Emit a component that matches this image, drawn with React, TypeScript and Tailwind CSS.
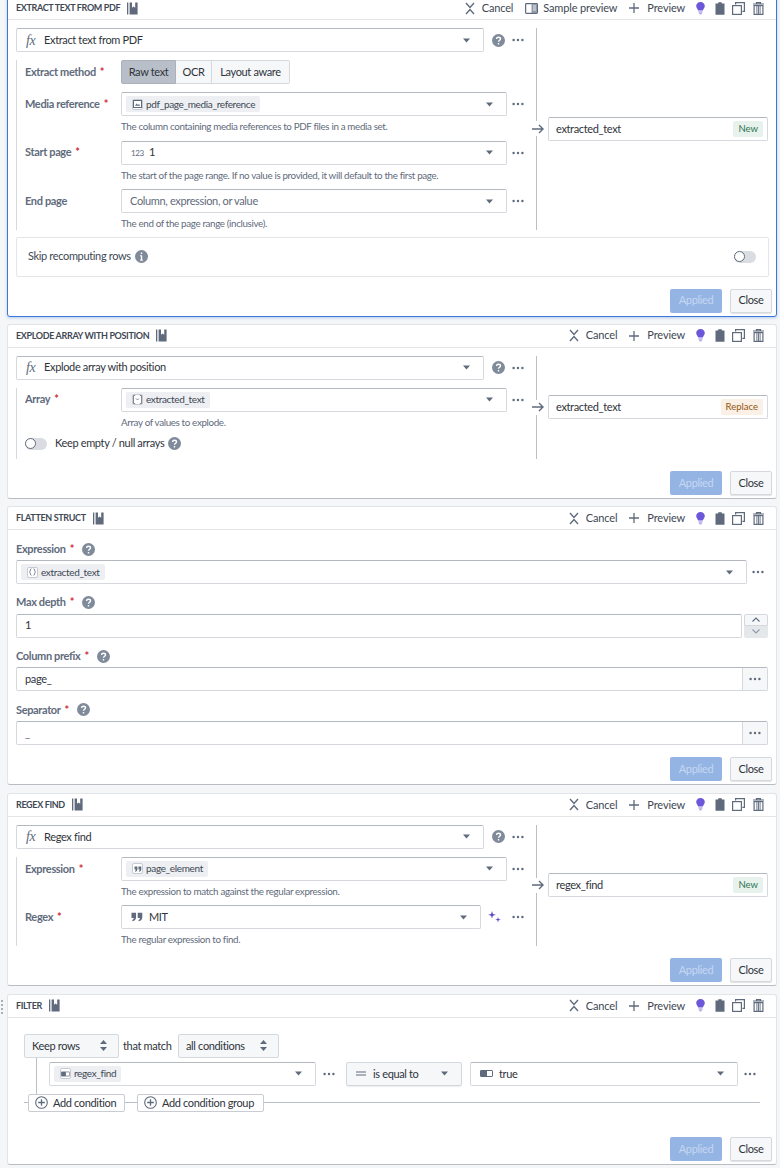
import type { ReactNode } from 'react';

const inputCls =
  'flex h-6 items-center rounded-[2px] border border-[#d5d9de] border-t-[#b4b9bf] bg-white text-[#2f343c]';

function BookIcon() {
  return (
    <svg width="11" height="13" viewBox="0 0 11 13" className="shrink-0">
      <rect x="0" y="0.5" width="1.3" height="12" fill="#5f6b7c" />
      <path d="M2.6 0.5H10.6V12.5H2.6Z M5 0.5V5.8L6.6 4.6L8.2 5.8V0.5Z" fill="#5f6b7c" fillRule="evenodd" />
    </svg>
  );
}

function CancelIcon() {
  return (
    <svg width="10" height="13" viewBox="0 0 10 13" fill="none" stroke="#5f6b7c" strokeWidth="1.4" className="shrink-0">
      <path d="M1 1L5 5.4L9 1" />
      <path d="M1 12L5 7.6L9 12" />
    </svg>
  );
}

function PanelIcon() {
  return (
    <svg width="13" height="11" viewBox="0 0 13 11" className="shrink-0">
      <rect x="0.6" y="0.6" width="11.8" height="9.8" rx="0.8" fill="none" stroke="#5f6b7c" strokeWidth="1.2" />
      <rect x="6.5" y="1" width="5.5" height="9" fill="#8f99a8" />
      <path d="M8 3H11M8 5H11M8 7H11" stroke="#fff" strokeWidth="0.8" />
    </svg>
  );
}

function PlusIcon() {
  return (
    <svg width="10" height="10" viewBox="0 0 10 10" stroke="#5f6b7c" strokeWidth="1.3" className="shrink-0">
      <path d="M5 0V10M0 5H10" />
    </svg>
  );
}

function BulbIcon() {
  return (
    <svg width="9" height="13" viewBox="0 0 9 13" className="shrink-0">
      <path d="M4.5 0C2 0 0.2 1.8 0.2 4.1C0.2 6 1.7 7 2.2 8.6H6.8C7.3 7 8.8 6 8.8 4.1C8.8 1.8 7 0 4.5 0Z" fill="#6c56d9" />
      <path d="M2.5 10H6.5M3.3 11.8H5.7" stroke="#8e7de2" strokeWidth="1.1" />
    </svg>
  );
}

function ClipboardIcon() {
  return (
    <svg width="10" height="13" viewBox="0 0 10 13" className="shrink-0">
      <path d="M3.2 0.3H6.8V1.6H9.5V12.7H0.5V1.6H3.2Z" fill="#5f6b7c" />
    </svg>
  );
}

function DuplicateIcon() {
  return (
    <svg width="13" height="13" viewBox="0 0 13 13" fill="none" stroke="#5f6b7c" strokeWidth="1.2" className="shrink-0">
      <rect x="0.6" y="3.6" width="8.8" height="8.8" />
      <path d="M3.6 2.6V0.6H12.4V9.4H10.4" />
    </svg>
  );
}

function TrashIcon() {
  return (
    <svg width="11" height="13" viewBox="0 0 11 13" fill="none" stroke="#5f6b7c" className="shrink-0">
      <path d="M0 2H11M3.5 1.5V0.6H7.5V1.5" strokeWidth="1.2" />
      <rect x="1.1" y="3.6" width="8.8" height="8.8" strokeWidth="1.2" />
      <path d="M3.9 4V12M5.5 4V12M7.1 4V12" strokeWidth="0.9" />
    </svg>
  );
}

function HelpIcon({ kind = 'help' }: { kind?: 'help' | 'info' }) {
  return (
    <svg width="13" height="13" viewBox="0 0 13 13" className="shrink-0">
      <circle cx="6.5" cy="6.5" r="6.5" fill="#7f8a9a" />
      {kind === 'help' ? (
        <path d="M4.5 5C4.6 3.8 5.4 3.2 6.5 3.2C7.7 3.2 8.5 3.9 8.5 4.9C8.5 6.2 6.6 6.3 6.5 7.8M6.5 9V10.4" fill="none" stroke="#fff" strokeWidth="1.4" />
      ) : (
        <path d="M6.5 2.6V4.1M6.5 5.4V10.2M5.3 5.6H6.5M5.2 10.1H7.8" fill="none" stroke="#fff" strokeWidth="1.4" />
      )}
    </svg>
  );
}

function Dots() {
  return (
    <svg width="12" height="4" viewBox="0 0 12 4" fill="#5f6b7c" className="shrink-0">
      <circle cx="1.6" cy="2" r="1.2" />
      <circle cx="6" cy="2" r="1.2" />
      <circle cx="10.4" cy="2" r="1.2" />
    </svg>
  );
}

function Caret() {
  return (
    <svg width="7" height="5" viewBox="0 0 7 5" fill="#5f6b7c" className="shrink-0">
      <path d="M0 0.5H7L3.5 4.5Z" />
    </svg>
  );
}

function UpDown() {
  return (
    <svg width="7" height="11" viewBox="0 0 7 11" fill="#5f6b7c" className="shrink-0">
      <path d="M3.5 0L7 4H0Z M3.5 11L0 7H7Z" />
    </svg>
  );
}

function QuoteIcon({ size = 8 }: { size?: number }) {
  return (
    <svg width={size + 2} height={size} viewBox="0 0 10 8" fill="#5f6b7c" className="shrink-0">
      <path d="M0.4 0.5H4.2V4.2C4.2 6 3 7.3 1.3 7.6L1 6.6C1.8 6.3 2.3 5.6 2.3 4.8H0.4Z" />
      <path d="M5.6 0.5H9.4V4.2C9.4 6 8.2 7.3 6.5 7.6L6.2 6.6C7 6.3 7.5 5.6 7.5 4.8H5.6Z" />
    </svg>
  );
}

function ImageGlyph() {
  return (
    <svg width="9" height="8" viewBox="0 0 9 8" className="shrink-0">
      <rect x="0.5" y="0.5" width="8" height="7" fill="none" stroke="#5f6b7c" />
      <path d="M2 5.8L3.6 3.6L5 5L6 4L7.2 5.8Z" fill="#5f6b7c" />
    </svg>
  );
}

function ArrayGlyph() {
  return (
    <svg width="9" height="9" viewBox="0 0 9 9" fill="none" stroke="#5f6b7c" strokeWidth="0.8" className="shrink-0">
      <path d="M2.2 0.5H0.5V8.5H2.2M6.8 0.5H8.5V8.5H6.8M3 3.5L4.5 5L6 3.5" />
    </svg>
  );
}

function StructGlyph() {
  return (
    <svg width="7" height="8" viewBox="0 0 7 8" fill="none" stroke="#5f6b7c" strokeWidth="0.8" className="shrink-0">
      <path d="M2.4 0.5C1.2 0.5 1.6 3.4 0.5 4C1.6 4.6 1.2 7.5 2.4 7.5M4.6 0.5C5.8 0.5 5.4 3.4 6.5 4C5.4 4.6 5.8 7.5 4.6 7.5" />
    </svg>
  );
}

function BoolGlyph({ wide }: { wide?: boolean }) {
  return (
    <svg width={wide ? 13 : 9} height={wide ? 7 : 6} viewBox="0 0 13 7" className="shrink-0">
      <rect x="0.5" y="0.5" width="12" height="6" rx="0.6" fill="none" stroke="#5f6b7c" />
      <rect x="0.5" y="0.5" width="6.5" height="6" fill="#5f6b7c" />
    </svg>
  );
}

function CircledPlus() {
  return (
    <svg width="13" height="13" viewBox="0 0 13 13" fill="none" stroke="#5f6b7c" strokeWidth="1.1" className="shrink-0">
      <circle cx="6.5" cy="6.5" r="5.8" />
      <path d="M6.5 3.2V9.8M3.2 6.5H9.8" strokeWidth="1.3" />
    </svg>
  );
}

function Sparkles() {
  return (
    <svg width="13" height="12" viewBox="0 0 13 12" fill="#5b45c9" className="shrink-0">
      <path d="M4 0L4.9 2.9L7.8 3.8L4.9 4.7L4 7.6L3.1 4.7L0.2 3.8L3.1 2.9Z" />
      <path d="M10 6L10.6 8.1L12.7 8.7L10.6 9.3L10 11.4L9.4 9.3L7.3 8.7L9.4 8.1Z" />
    </svg>
  );
}

function Chip({ icon, children }: { icon: ReactNode; children: ReactNode }) {
  return (
    <span className="ml-1 flex h-4 items-center gap-[3px] rounded-[2px] bg-[#edeff2] pl-[6px] pr-[5px] text-[10px] text-[#404854]">
      <span className="flex h-[11px] w-[11px] items-center justify-center rounded-[2px] border border-[#c5cbd3] bg-white">{icon}</span>
      {children}
    </span>
  );
}

function Toggle() {
  return (
    <span className="flex h-3 w-[22px] shrink-0 items-center rounded-full bg-[#d9dce1]">
      <span className="h-[11px] w-[11px] rounded-full border border-[#5f6b7c] bg-white" />
    </span>
  );
}

function Star() {
  return <span className="ml-1 text-[#cd2f3d]">*</span>;
}

function Card({ title, sample, active, mt, children }: { title: string; sample?: boolean; active?: boolean; mt: string; children: ReactNode }) {
  return (
    <section className={`relative ml-[7px] w-[770px] rounded-[3px] border bg-white ${mt} ${active ? 'border-[#3c78d8] shadow-[0_1px_3px_rgba(60,120,216,0.35)]' : 'border-[#e1e4e8] border-b-[#b9bdc3]'}`}>
      <header className="flex h-[23px] items-center border-b border-[#e3e5e8] pl-2 pr-[12px]">
        <h2 className="text-[9px] font-bold uppercase text-[#404854]">{title}</h2>
        <span className="ml-[7px]"><BookIcon /></span>
        <div className="ml-auto flex items-center text-[11px] tracking-[-0.15px] text-[#404854]">
          <CancelIcon />
          <span className="ml-[7px]">Cancel</span>
          {sample && (
            <>
              <span className="ml-[12px]"><PanelIcon /></span>
              <span className="ml-[5px]">Sample preview</span>
            </>
          )}
          <span className="ml-[12px]"><PlusIcon /></span>
          <span className="ml-[8px]">Preview</span>
          <span className="ml-[11px]"><BulbIcon /></span>
          <span className="ml-[10px]"><ClipboardIcon /></span>
          <span className="ml-[7px]"><DuplicateIcon /></span>
          <span className="ml-[8px]"><TrashIcon /></span>
        </div>
      </header>
      {children}
    </section>
  );
}

function Footer({ gap = 'mt-3' }: { gap?: string }) {
  return (
    <div className={`flex justify-end gap-2 pb-[3px] pr-1 ${gap}`}>
      <button className="h-6 w-[52px] rounded-[2px] bg-[#94b4e4] text-[11px] text-[#c6d7f1]">Applied</button>
      <button className="h-6 w-[42px] rounded-[2px] border border-[#d5d9de] bg-[#f6f7f9] text-[11px] text-[#2f343c] shadow-[0_1px_1px_rgba(17,20,24,0.12)]">Close</button>
    </div>
  );
}

function FnRow({ name }: { name: string }) {
  return (
    <div className="flex items-center">
      <div className={`${inputCls} w-[468px] pl-[9px] pr-[13px] text-[11px]`}>
        <span className="w-[18px] font-['Liberation_Serif',serif] text-[14px] italic text-[#5f6b7c]">fx</span>
        {name}
        <span className="ml-auto"><Caret /></span>
      </div>
      <span className="ml-2"><HelpIcon /></span>
      <span className="ml-[7px]"><Dots /></span>
    </div>
  );
}

function FieldRow({ label, required = true, help, width = 'w-[386px]', extra, children }: { label: string; required?: boolean; help?: string; width?: string; extra?: ReactNode; children: ReactNode }) {
  return (
    <div>
      <div className="flex items-center">
        <div className="w-[96px] shrink-0 text-[11px] font-bold text-[#5f6b7c]">
          {label}
          {required && <Star />}
        </div>
        <div className={`${inputCls} ${width} pr-[13px] text-[11px]`}>
          {children}
          <span className="ml-auto"><Caret /></span>
        </div>
        {extra}
        <span className="ml-[5px]"><Dots /></span>
      </div>
      {help && <p className="ml-[96px] h-[16.5px] pt-[3px] text-[9.8px] leading-[14px] text-[#5f6b7c]">{help}</p>}
    </div>
  );
}

function Output({ name, tag }: { name: string; tag: 'New' | 'Replace' }) {
  return (
    <div className="flex flex-1 items-center">
      <span className="relative z-10 -ml-[5px] flex h-[15px] w-[12px] items-center bg-white">
        <svg width="12" height="10" viewBox="0 0 12 10" fill="none" stroke="#5f6b7c" strokeWidth="1.4">
          <path d="M0 5H11M7 1L11 5L7 9" />
        </svg>
      </span>
      <div className={`${inputCls} ml-1 w-[220px] pl-[7px] pr-1 text-[11px]`}>
        {name}
        <span className={`ml-auto flex h-4 items-center rounded-[2px] px-[5px] text-[9.5px] tracking-normal ${tag === 'New' ? 'bg-[#e8f2ec] text-[#2e7452]' : 'bg-[#faf0e6] text-[#935610]'}`}>{tag}</span>
      </div>
    </div>
  );
}

function SmallLabel({ text }: { text: string }) {
  return (
    <div className="flex h-[22px] items-center gap-[8px] text-[11px] font-bold text-[#5f6b7c]">
      <span>
        {text}
        <Star />
      </span>
      <HelpIcon />
    </div>
  );
}

function RightButton() {
  return (
    <span className="ml-auto flex h-full w-[25px] items-center justify-center border-l border-[#d5d9de] bg-[#f6f7f9]">
      <Dots />
    </span>
  );
}

function ExtractCard() {
  return (
    <Card title="Extract text from PDF" sample active mt="-mt-1">
      <div className="px-2 pt-2">
        <div className="flex">
          <div className="w-[521px] shrink-0 border-r border-[#b9bfc7]">
            <FnRow name="Extract text from PDF" />
            <div className="mt-2 flex flex-col gap-2 border-l border-[#d5d9de] pl-2">
              <div className="flex items-center">
                <div className="w-[96px] text-[11px] font-bold text-[#5f6b7c]">
                  Extract method
                  <Star />
                </div>
                <div className="flex h-6 text-[11px] text-[#2f343c]">
                  <span className="flex w-[55px] items-center justify-center rounded-l-[2px] border border-[#a9b1bb] bg-[#b8bfc8]">Raw text</span>
                  <span className="flex w-[36px] items-center justify-center border-y border-r border-[#d5d9de] bg-[#f6f7f9]">OCR</span>
                  <span className="flex w-[78px] items-center justify-center rounded-r-[2px] border-y border-r border-[#d5d9de] bg-[#f6f7f9]">Layout aware</span>
                </div>
              </div>
              <FieldRow label="Media reference" help="The column containing media references to PDF files in a media set.">
                <Chip icon={<ImageGlyph />}>pdf_page_media_reference</Chip>
              </FieldRow>
              <FieldRow label="Start page" help="The start of the page range. If no value is provided, it will default to the first page.">
                <span className="ml-[9px] mr-[5px] text-[8px] text-[#5f6b7c]">123</span>1
              </FieldRow>
              <FieldRow label="End page" required={false} help="The end of the page range (inclusive).">
                <span className="ml-2 text-[#5f6b7c]">Column, expression, or value</span>
              </FieldRow>
            </div>
          </div>
          <Output name="extracted_text" tag="New" />
        </div>
        <div className="mt-[7px] flex h-10 w-[753px] items-center rounded-[2px] border border-[#e3e5e8] pl-[11px] pr-3 text-[11px] text-[#404854]">
          Skip recomputing rows
          <span className="ml-[4px]"><HelpIcon kind="info" /></span>
          <span className="ml-auto"><Toggle /></span>
        </div>
      </div>
      <Footer />
    </Card>
  );
}

function ExplodeCard() {
  return (
    <Card title="Explode array with position" mt="mt-[7px]">
      <div className="px-2 pt-2">
        <div className="flex">
          <div className="w-[521px] shrink-0 border-r border-[#b9bfc7]">
            <FnRow name="Explode array with position" />
            <div className="mt-2 flex flex-col gap-2 border-l border-[#d5d9de] pb-2 pl-2">
              <FieldRow label="Array" help="Array of values to explode.">
                <Chip icon={<ArrayGlyph />}>extracted_text</Chip>
              </FieldRow>
              <div className="flex h-[15px] items-center text-[11px] text-[#2f343c]">
                <Toggle />
                <span className="ml-2">Keep empty / null arrays</span>
                <span className="ml-[4px]"><HelpIcon /></span>
              </div>
            </div>
          </div>
          <Output name="extracted_text" tag="Replace" />
        </div>
      </div>
      <Footer />
    </Card>
  );
}

function FlattenCard() {
  return (
    <Card title="Flatten struct" mt="mt-[7px]">
      <div className="px-2 pt-2">
        <SmallLabel text="Expression" />
        <div className="flex items-center">
          <div className={`${inputCls} w-[731px] pr-[13px]`}>
            <Chip icon={<StructGlyph />}>extracted_text</Chip>
            <span className="ml-auto"><Caret /></span>
          </div>
          <span className="ml-[5px]"><Dots /></span>
        </div>
        <div className="mt-[7.6px]"><SmallLabel text="Max depth" /></div>
        <div className="flex items-center">
          <div className={`${inputCls} w-[726px] pl-2 text-[11px]`}>1</div>
          <div className="ml-[2px] flex h-6 w-6 flex-col">
            <span className="flex h-3 items-center justify-center rounded-t-[2px] border border-[#d5d9de] bg-[#f6f7f9]">
              <svg width="8" height="5" viewBox="0 0 8 5" fill="none" stroke="#5f6b7c" strokeWidth="1.1"><path d="M0.5 4.5L4 1L7.5 4.5" /></svg>
            </span>
            <span className="flex h-3 items-center justify-center rounded-b-[2px] bg-[#e5e8eb]">
              <svg width="8" height="5" viewBox="0 0 8 5" fill="none" stroke="#8f99a8" strokeWidth="1.1"><path d="M0.5 0.5L4 4L7.5 0.5" /></svg>
            </span>
          </div>
        </div>
        <div className="mt-[7.6px]"><SmallLabel text="Column prefix" /></div>
        <div className={`${inputCls} w-[752px] pl-2 text-[11px]`}>
          page_
          <RightButton />
        </div>
        <div className="mt-[7.6px]"><SmallLabel text="Separator" /></div>
        <div className={`${inputCls} w-[752px] pl-2 text-[11px]`}>
          <span className="text-[#5f6b7c]">_</span>
          <RightButton />
        </div>
      </div>
      <Footer />
    </Card>
  );
}

function RegexCard() {
  return (
    <Card title="Regex find" mt="mt-2">
      <div className="px-2 pt-2">
        <div className="flex">
          <div className="w-[521px] shrink-0 border-r border-[#b9bfc7]">
            <FnRow name="Regex find" />
            <div className="mt-2 flex flex-col gap-2 border-l border-[#d5d9de] pl-2">
              <FieldRow label="Expression" help="The expression to match against the regular expression.">
                <Chip icon={<QuoteIcon size={6} />}>page_element</Chip>
              </FieldRow>
              <FieldRow
                label="Regex"
                width="w-[360px]"
                help="The regular expression to find."
                extra={<span className="ml-[7px] mr-[6px]"><Sparkles /></span>}
              >
                <span className="ml-[9px] mr-[6px]"><QuoteIcon size={10} /></span>
                MIT
              </FieldRow>
            </div>
          </div>
          <Output name="regex_find" tag="New" />
        </div>
      </div>
      <Footer />
    </Card>
  );
}

function FilterCard() {
  return (
    <Card title="Filter" mt="mt-2">
      <span className="absolute -left-[7px] top-[5px] grid grid-cols-1 gap-[2px]">
        {[0, 1, 2, 3].map((i) => (
          <span key={i} className="h-[2px] w-[2px] rounded-full bg-[#8f99a8]" />
        ))}
      </span>
      <div className="pl-4 pr-2 pt-4">
        <div className="flex items-center text-[11px] text-[#2f343c]">
          <span className="flex h-6 w-[95px] items-center justify-between rounded-[2px] border border-[#d5d9de] bg-[#f6f7f9] pl-[7px] pr-[11px]">
            Keep rows
            <UpDown />
          </span>
          <span className="ml-1 w-[50px] whitespace-nowrap">that match</span>
          <span className="ml-[5px] flex h-6 w-[101px] items-center justify-between rounded-[2px] border border-[#d5d9de] bg-[#f6f7f9] pl-[7px] pr-[11px]">
            all conditions
            <UpDown />
          </span>
        </div>
        <div className="ml-3 border-l border-[#b9bfc7] pb-2 pl-3 pt-1">
          <div className="flex items-center text-[11px]">
            <div className={`${inputCls} w-[267px] pr-[13px]`}>
              <Chip icon={<BoolGlyph />}>regex_find</Chip>
              <span className="ml-auto"><Caret /></span>
            </div>
            <span className="ml-[7px]"><Dots /></span>
            <span className="ml-[11px] flex h-6 w-[116px] items-center rounded-[2px] border border-[#d5d9de] bg-[#f6f7f9] pl-[9px] pr-[13px] text-[#2f343c] shadow-[0_1px_1px_rgba(17,20,24,0.08)]">
              <svg width="10" height="5" viewBox="0 0 10 5" stroke="#5f6b7c" strokeWidth="1.2"><path d="M0 1H10M0 4H10" /></svg>
              <span className="ml-[7px]">is equal to</span>
              <span className="ml-auto"><Caret /></span>
            </span>
            <div className={`${inputCls} ml-2 w-[268px] pl-[9px] pr-[13px]`}>
              <BoolGlyph wide />
              <span className="ml-[6px]">true</span>
              <span className="ml-auto"><Caret /></span>
            </div>
            <span className="ml-[6px]"><Dots /></span>
          </div>
        </div>
        <div className="flex h-[18px] w-[736px] items-center whitespace-nowrap text-[11px] text-[#2f343c]">
          <span className="h-px w-1 bg-[#b9bfc7]" />
          <span className="flex h-[18px] w-[97px] items-center gap-[5px] rounded-[2px] border border-[#c9cdd3] bg-white pl-[6px]">
            <CircledPlus />
            Add condition
          </span>
          <span className="h-px w-3 bg-[#b9bfc7]" />
          <span className="flex h-[18px] w-[127px] items-center gap-[5px] rounded-[2px] border border-[#c9cdd3] bg-white pl-[6px]">
            <CircledPlus />
            Add condition group
          </span>
          <span className="h-px flex-1 bg-[#b9bfc7]" />
        </div>
      </div>
      <Footer gap="mt-[25px]" />
    </Card>
  );
}

export default function App() {
  return (
    <div className="h-[1168px] w-[780px] overflow-hidden bg-[#f5f6f8] font-['Lato','Liberation_Sans',sans-serif] tracking-[-0.35px]">
      <ExtractCard />
      <ExplodeCard />
      <FlattenCard />
      <RegexCard />
      <FilterCard />
    </div>
  );
}
